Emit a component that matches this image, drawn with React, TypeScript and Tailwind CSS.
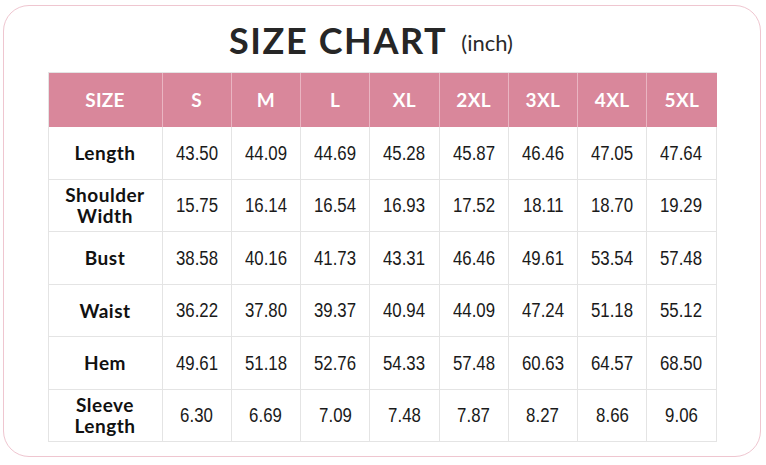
const SIZES = ["S", "M", "L", "XL", "2XL", "3XL", "4XL", "5XL"];

const ROWS: { label: string[]; values: string[] }[] = [
  { label: ["Length"], values: ["43.50", "44.09", "44.69", "45.28", "45.87", "46.46", "47.05", "47.64"] },
  { label: ["Shoulder", "Width"], values: ["15.75", "16.14", "16.54", "16.93", "17.52", "18.11", "18.70", "19.29"] },
  { label: ["Bust"], values: ["38.58", "40.16", "41.73", "43.31", "46.46", "49.61", "53.54", "57.48"] },
  { label: ["Waist"], values: ["36.22", "37.80", "39.37", "40.94", "44.09", "47.24", "51.18", "55.12"] },
  { label: ["Hem"], values: ["49.61", "51.18", "52.76", "54.33", "57.48", "60.63", "64.57", "68.50"] },
  { label: ["Sleeve", "Length"], values: ["6.30", "6.69", "7.09", "7.48", "7.87", "8.27", "8.66", "9.06"] },
];

export default function App() {
  return (
    <div className="w-[766px] h-[465px] bg-white pt-[5px] pl-[3px]">
      <div className="w-[758px] h-[452px] rounded-[26px] border-[1.5px] border-[#efc6d0] bg-white flex flex-col items-center">
        {/* title */}
        <div className="h-[66px] flex items-center justify-center pr-[22px] pt-[2px]">
          <span className="font-['Lato',sans-serif] font-bold text-[36px] tracking-[1.6px] text-[#262626]">
            SIZE CHART
          </span>
          <span className="ml-[14px] mt-[4px] font-['Lato',sans-serif] text-[22px] text-[#2a2a2a]">(inch)</span>
        </div>

        {/* table */}
        <div className="w-[669px] grid grid-cols-[114px_repeat(8,1fr)] border-l border-t border-[#e4e4e4]">
          <div className="h-[54px] bg-[#d9879b] flex items-center justify-center border-r border-[#eab5c2] font-['Lato',sans-serif] font-bold text-[19px] tracking-[0.3px] text-white">
            SIZE
          </div>
          {SIZES.map((s, i) => (
            <div
              key={s}
              className={`h-[54px] bg-[#d9879b] flex items-center justify-center font-['Lato',sans-serif] font-bold text-[19px] tracking-[0.3px] text-white ${
                i < SIZES.length - 1 ? "border-r border-[#eab5c2]" : ""
              }`}
            >
              {s}
            </div>
          ))}

          {ROWS.map((row) => (
            <>
              <div
                key={row.label.join("-")}
                className="h-[52.5px] flex flex-col items-center justify-center border-r border-b border-[#e4e4e4] font-['Lato',sans-serif] font-bold text-[19px] tracking-[0.5px] leading-[21px] text-[#111]"
              >
                {row.label.map((l) => (
                  <span key={l}>{l}</span>
                ))}
              </div>
              {row.values.map((v, i) => (
                <div
                  key={row.label[0] + i}
                  className="h-[52.5px] flex items-center justify-center border-r border-b border-[#e4e4e4] font-['Liberation_Sans',sans-serif] text-[20px] text-[#1a1a1a]"
                >
                  <span className="inline-block scale-x-[0.84]">{v}</span>
                </div>
              ))}
            </>
          ))}
        </div>
      </div>
    </div>
  );
}
